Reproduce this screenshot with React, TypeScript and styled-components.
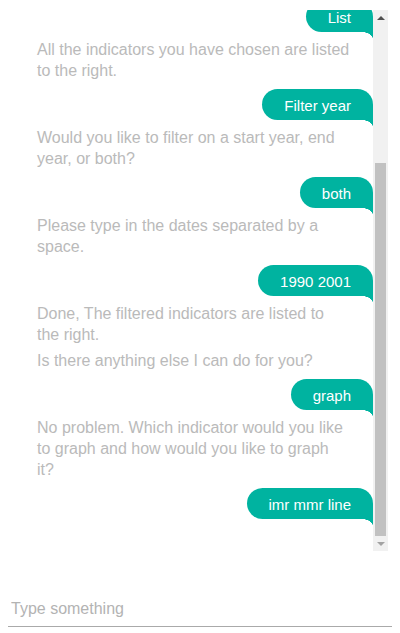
import React, { useLayoutEffect, useRef, useState } from 'react';
import styled, { createGlobalStyle } from 'styled-components';

const GREEN = '#00b3a0';

const Global = createGlobalStyle`
  html, body { margin: 0; padding: 0; background: #fff; }
  body { font-family: "Liberation Sans", Arial, sans-serif; }
`;

const Page = styled.div`
  display: flex;
  flex-direction: column;
  padding: 10px 8px 0;
`;

const ChatFrame = styled.div`
  display: flex;
  width: 380px;
  height: 541px;
`;

const Viewport = styled.div`
  flex: 1;
  min-width: 0;
  overflow: hidden;
`;

const Rail = styled.div`
  width: 15px;
  flex: none;
  display: flex;
  flex-direction: column;
  background: #f1f1f1;
`;

const RailButton = styled.div`
  height: 15px;
  flex: none;
  display: flex;
  align-items: center;
  justify-content: center;
`;

const Track = styled.div`
  flex: 1;
  position: relative;
`;

const Thumb = styled.div`
  position: absolute;
  left: 2px;
  right: 2px;
  background: #c1c1c1;
`;

const Thread = styled.div`
  display: flex;
  flex-direction: column;
  padding: 7px 0 25px;
`;

const UserRow = styled.div`
  display: flex;
  justify-content: flex-end;
  margin-bottom: 7px;
`;

const Bubble = styled.div`
  position: relative;
  background: ${GREEN};
  color: #fff;
  font-size: 15px;
  line-height: 17px;
  padding: 8px 22px 6px;
  border-radius: 16px 16px 0 16px;
  white-space: nowrap;

  &::after {
    content: '';
    position: absolute;
    right: 0;
    top: 100%;
    width: 11px;
    height: 7px;
    background: radial-gradient(ellipse 100% 100% at 0 100%, transparent 96%, ${GREEN} 100%);
  }
`;

const BotText = styled.p`
  margin: 0 0 8px;
  padding-left: 29px;
  max-width: 313px;
  color: #bababa;
  font-size: 16px;
  line-height: 21px;

  & + & {
    margin-top: -3px;
  }
`;

const Composer = styled.input`
  margin-top: 45px;
  width: 384px;
  height: 31px;
  box-sizing: border-box;
  border: none;
  border-bottom: 1px solid #aaaaaa;
  padding: 4px 3px 8px;
  font-family: "Liberation Sans", Arial, sans-serif;
  font-size: 16px;
  line-height: 18px;
  color: #555;
  outline: none;
  background: transparent;

  &::placeholder {
    color: #b3b3b3;
  }
`;

type Msg = { from: 'user' | 'bot'; text: string };

const messages: Msg[] = [
  { from: 'bot', text: 'Hi, I am the indicator bot. What would you like to do today?' },
  { from: 'user', text: 'Search' },
  { from: 'bot', text: 'Which indicators are you looking for?' },
  { from: 'user', text: 'imr mmr' },
  { from: 'bot', text: 'Added 2 indicators.' },
  { from: 'user', text: 'List' },
  { from: 'bot', text: 'All the indicators you have chosen are listed to the right.' },
  { from: 'user', text: 'Filter year' },
  { from: 'bot', text: 'Would you like to filter on a start year, end year, or both?' },
  { from: 'user', text: 'both' },
  { from: 'bot', text: 'Please type in the dates separated by a space.' },
  { from: 'user', text: '1990 2001' },
  { from: 'bot', text: 'Done, The filtered indicators are listed to the right.' },
  { from: 'bot', text: 'Is there anything else I can do for you?' },
  { from: 'user', text: 'graph' },
  { from: 'bot', text: 'No problem. Which indicator would you like to graph and how would you like to graph it?' },
  { from: 'user', text: 'imr mmr line' },
];

const Arrow = ({ up, color }: { up?: boolean; color: string }) => (
  <svg width="8" height="4" viewBox="0 0 8 4">
    <polygon points={up ? '4,0 8,4 0,4' : '0,0 8,0 4,4'} fill={color} />
  </svg>
);

export default function App() {
  const viewRef = useRef<HTMLDivElement>(null);
  const [thumb, setThumb] = useState({ top: 0, height: 0 });

  useLayoutEffect(() => {
    const el = viewRef.current;
    if (!el) return;
    el.scrollTop = el.scrollHeight;
    const track = el.clientHeight - 30;
    setThumb({
      top: (track * el.scrollTop) / el.scrollHeight,
      height: (track * el.clientHeight) / el.scrollHeight,
    });
  }, []);

  return (
    <>
      <Global />
      <Page>
        <ChatFrame>
          <Viewport ref={viewRef}>
            <Thread>
              {messages.map((m, i) =>
                m.from === 'user' ? (
                  <UserRow key={i}>
                    <Bubble>{m.text}</Bubble>
                  </UserRow>
                ) : (
                  <BotText key={i}>{m.text}</BotText>
                )
              )}
            </Thread>
          </Viewport>
          <Rail>
            <RailButton>
              <Arrow up color="#505050" />
            </RailButton>
            <Track>
              <Thumb style={{ top: thumb.top, height: thumb.height }} />
            </Track>
            <RailButton>
              <Arrow color="#a3a3a3" />
            </RailButton>
          </Rail>
        </ChatFrame>
        <Composer placeholder="Type something" />
      </Page>
    </>
  );
}
